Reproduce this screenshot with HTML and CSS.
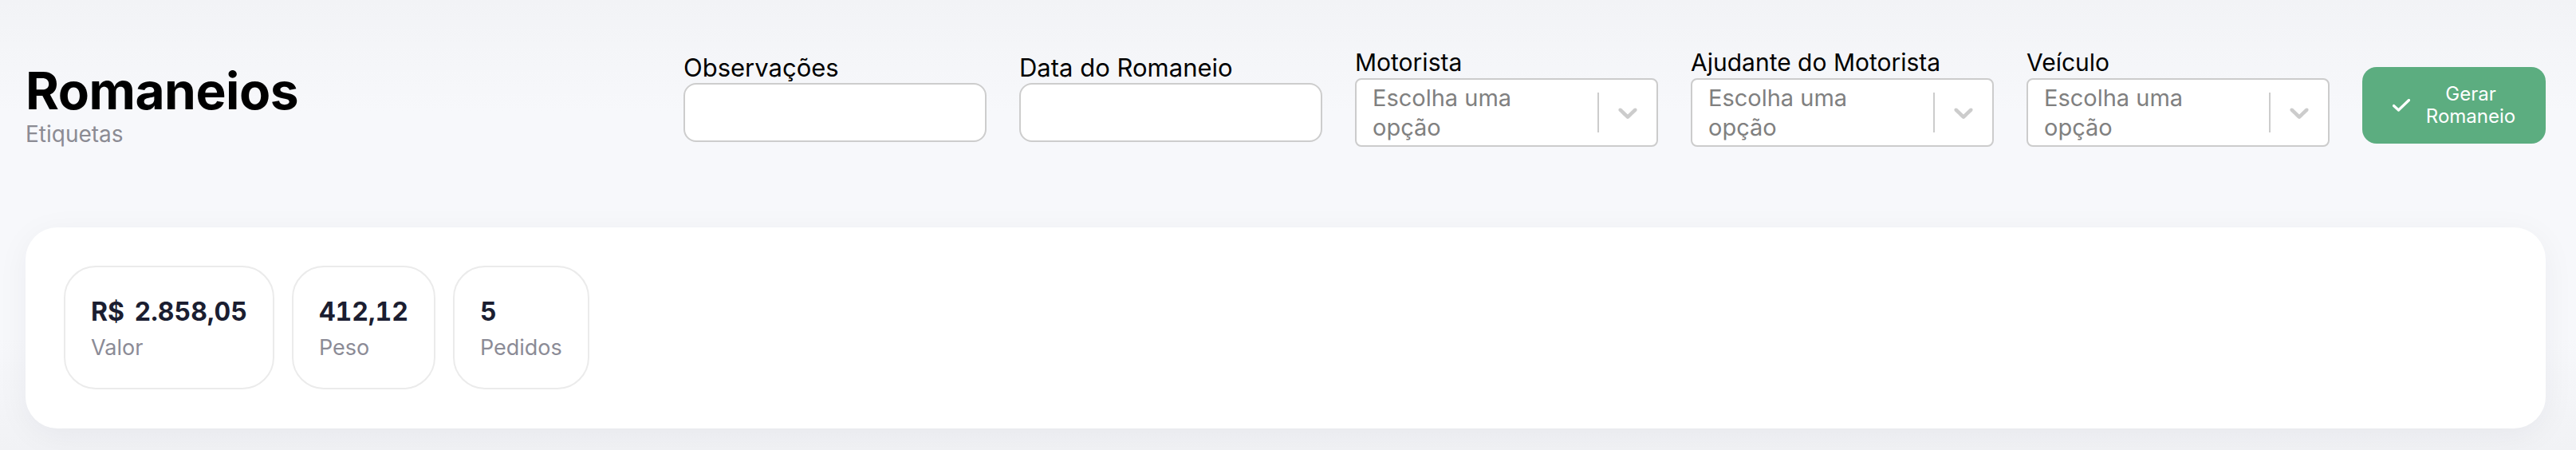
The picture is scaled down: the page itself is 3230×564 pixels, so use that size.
FILE: index.html
```html
<!DOCTYPE html>
<html lang="pt-BR">
<head>
<meta charset="utf-8">
<title>Romaneios</title>
<link rel="stylesheet" href="styles.css">
</head>
<body>
<div class="page">
  <header class="header">
    <div class="title-block">
      <h1 class="title">Romaneios</h1>
      <div class="subtitle">Etiquetas</div>
    </div>
    <div class="form">
      <div class="field">
        <label class="label label-input">Observações</label>
        <input class="input" type="text">
      </div>
      <div class="field">
        <label class="label label-input">Data do Romaneio</label>
        <input class="input" type="text">
      </div>
      <div class="field">
        <label class="label">Motorista</label>
        <div class="select">
          <div class="select-value"><span class="placeholder">Escolha uma opção</span></div>
          <div class="select-indicators">
            <span class="sep"></span>
            <span class="chev"><svg viewBox="0 0 20 20" width="40" height="40"><path d="M4.516 7.548c0.436-0.446 1.043-0.481 1.576 0l3.908 3.747 3.908-3.747c0.533-0.481 1.141-0.446 1.574 0 0.436 0.445 0.408 1.197 0 1.615-0.406 0.418-4.695 4.502-4.695 4.502-0.217 0.223-0.502 0.335-0.787 0.335s-0.57-0.112-0.789-0.335c0 0-4.287-4.084-4.695-4.502s-0.436-1.17 0-1.615z"/></svg></span>
          </div>
        </div>
      </div>
      <div class="field">
        <label class="label">Ajudante do Motorista</label>
        <div class="select">
          <div class="select-value"><span class="placeholder">Escolha uma opção</span></div>
          <div class="select-indicators">
            <span class="sep"></span>
            <span class="chev"><svg viewBox="0 0 20 20" width="40" height="40"><path d="M4.516 7.548c0.436-0.446 1.043-0.481 1.576 0l3.908 3.747 3.908-3.747c0.533-0.481 1.141-0.446 1.574 0 0.436 0.445 0.408 1.197 0 1.615-0.406 0.418-4.695 4.502-4.695 4.502-0.217 0.223-0.502 0.335-0.787 0.335s-0.57-0.112-0.789-0.335c0 0-4.287-4.084-4.695-4.502s-0.436-1.17 0-1.615z"/></svg></span>
          </div>
        </div>
      </div>
      <div class="field">
        <label class="label">Veículo</label>
        <div class="select">
          <div class="select-value"><span class="placeholder">Escolha uma opção</span></div>
          <div class="select-indicators">
            <span class="sep"></span>
            <span class="chev"><svg viewBox="0 0 20 20" width="40" height="40"><path d="M4.516 7.548c0.436-0.446 1.043-0.481 1.576 0l3.908 3.747 3.908-3.747c0.533-0.481 1.141-0.446 1.574 0 0.436 0.445 0.408 1.197 0 1.615-0.406 0.418-4.695 4.502-4.695 4.502-0.217 0.223-0.502 0.335-0.787 0.335s-0.57-0.112-0.789-0.335c0 0-4.287-4.084-4.695-4.502s-0.436-1.17 0-1.615z"/></svg></span>
          </div>
        </div>
      </div>
      <button class="btn" type="button">
        <svg class="check" viewBox="0 0 22 16" width="22" height="16"><polyline points="1.5,8.5 7.5,14 20.5,1.5" fill="none" stroke="#fff" stroke-width="3.2" stroke-linecap="round" stroke-linejoin="round"/></svg>
        <span class="btn-text">Gerar<br>Romaneio</span>
      </button>
    </div>
  </header>

  <section class="card">
    <div class="stats">
      <div class="stat">
        <div class="stat-value">R$ 2.858,05</div>
        <div class="stat-label">Valor</div>
      </div>
      <div class="stat">
        <div class="stat-value">412,12</div>
        <div class="stat-label">Peso</div>
      </div>
      <div class="stat">
        <div class="stat-value">5</div>
        <div class="stat-label">Pedidos</div>
      </div>
    </div>
  </section>
</div>
</body>
</html>
```

FILE: styles.css
```css
* { box-sizing: border-box; }

html, body {
  margin: 0;
  padding: 0;
}

body {
  font-family: "Inter", "Liberation Sans", sans-serif;
  background: linear-gradient(180deg, #f2f3f6 0%, #f7f8fb 25%, #f7f8fb 75%, #f1f2f5 100%);
  width: 3230px;
  height: 564px;
  overflow: hidden;
  color: #000;
}

.page {
  padding: 0 38px 0 32px;
}

.header {
  margin-top: 41px;
  height: 174px;
  display: flex;
  align-items: center;
  justify-content: space-between;
}

.title-block {
  display: flex;
  flex-direction: column;
}

.title {
  margin: 0;
  font-size: 64px;
  line-height: 80px;
  font-weight: 700;
  letter-spacing: -0.5px;
  color: #000;
}

.subtitle {
  font-size: 28px;
  line-height: 28px;
  color: #8b8b93;
}

.form {
  display: flex;
  align-items: center;
  gap: 41px;
  margin-bottom: 12px;
}

.field {
  display: flex;
  flex-direction: column;
  width: 380px;
}

.label {
  font-size: 30px;
  line-height: 36px;
  color: #000;
  margin-bottom: 2px;
  white-space: nowrap;
}

.label-input {
  font-size: 31px;
  line-height: 38px;
  margin-bottom: 0;
}

.input {
  width: 380px;
  height: 74px;
  border: 2px solid #cdcdcd;
  border-radius: 16px;
  background: #fff;
  outline: none;
  padding: 0 20px;
  font: inherit;
}

.select {
  display: flex;
  align-items: stretch;
  height: 86px;
  border: 2px solid #cccccc;
  border-radius: 8px;
  background: #fff;
}

.select-value {
  flex: 1;
  display: flex;
  align-items: center;
  padding: 4px 16px;
  min-width: 0;
}

.placeholder {
  margin: 0 4px;
  max-width: 220px;
  font-size: 29px;
  line-height: 37px;
  color: #808080;
}

.select-indicators {
  display: flex;
  align-items: center;
}

.sep {
  align-self: stretch;
  width: 2px;
  margin: 16px 0;
  background: #cccccc;
}

.chev {
  display: flex;
  padding: 16px;
}

.chev svg {
  fill: #cccccc;
  display: block;
}

.btn {
  width: 230px;
  height: 96px;
  margin-top: 20px;
  border: none;
  border-radius: 18px;
  background: #5cad80;
  color: #fff;
  display: flex;
  align-items: center;
  justify-content: center;
  gap: 20px;
  padding: 0;
  font-family: "Inter", "Liberation Sans", sans-serif;
  cursor: pointer;
}

.check {
  display: block;
  flex: none;
}

.btn-text {
  font-size: 24px;
  line-height: 28px;
  text-align: center;
}

.card {
  margin-top: 70px;
  background: #fff;
  border-radius: 40px;
  padding: 48px 48px 49px;
  box-shadow: 0 8px 40px rgba(20, 25, 60, 0.05);
}

.stats {
  display: flex;
  gap: 22px;
}

.stat {
  border: 2px solid #ebebeb;
  border-radius: 40px;
  padding: 34px 32px 29px;
}

.stat-value {
  font-size: 32px;
  line-height: 44px;
  font-weight: 700;
  color: #1b1e31;
  white-space: nowrap;
  font-variant-numeric: tabular-nums;
  word-spacing: 4px;
}

.stat-label {
  margin-top: 2px;
  font-size: 27px;
  line-height: 42px;
  color: #8b8b96;
}
```
